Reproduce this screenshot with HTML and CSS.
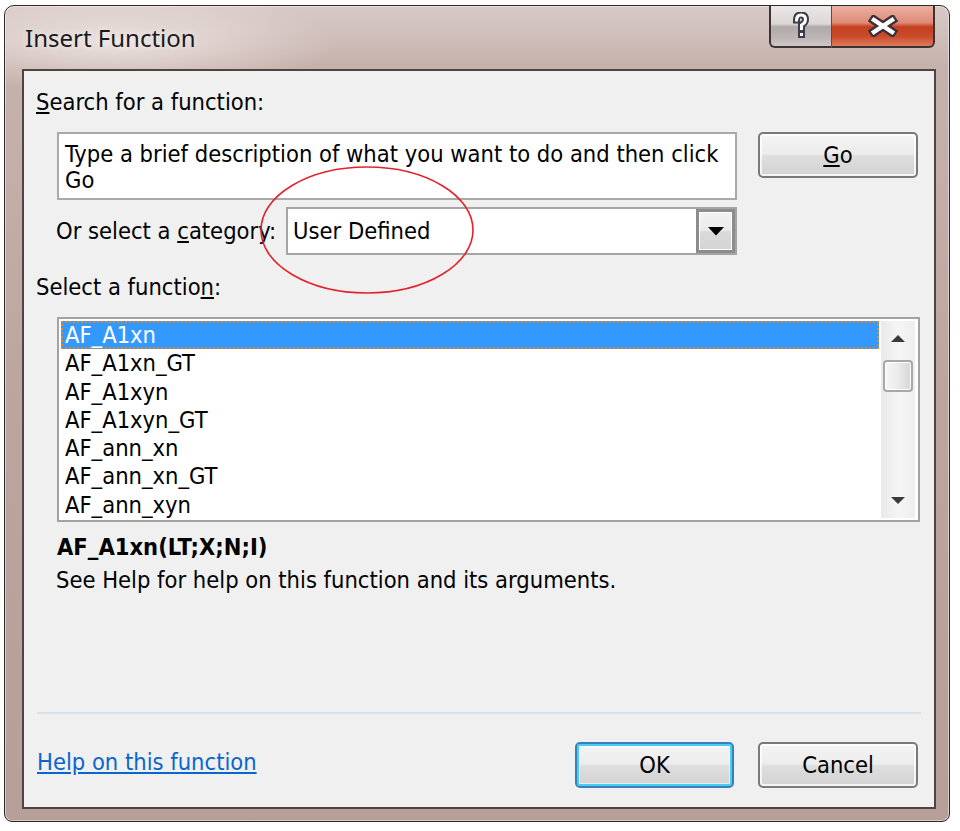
FILE: index.html
```html
<!DOCTYPE html>
<html lang="en">
<head>
<meta charset="utf-8">
<title>Insert Function</title>
<link rel="stylesheet" href="styles.css">
</head>
<body>
<div class="window">
  <div class="titlebar">
    <span class="title">Insert Function</span>
    <div class="caption-btns">
      <div class="cbtn help">
        <svg width="20" height="28" viewBox="-10 -14 20 28">
          <path d="M-4.5 -6 Q-4.5 -11 0 -11 Q4.5 -11 4.5 -6.5 Q4.5 -3 0.5 -1 L0.5 2.5" fill="none" stroke="#3c3c4c" stroke-width="7" stroke-linecap="square"/>
          <rect x="-3" y="5" width="7" height="7" fill="#3c3c4c"/>
          <path d="M-4.5 -6 Q-4.5 -11 0 -11 Q4.5 -11 4.5 -6.5 Q4.5 -3 0.5 -1 L0.5 2.5" fill="none" stroke="#ffffff" stroke-width="3" stroke-linecap="square"/>
          <rect x="-1" y="7" width="3" height="3" fill="#ffffff"/>
        </svg>
      </div>
      <div class="cbtn close">
        <svg width="30" height="22" viewBox="-15 -11 30 22">
          <path d="M-9 -6 L9 6 M9 -6 L-9 6" stroke="#3b2f3a" stroke-width="9" stroke-linecap="square"/>
          <path d="M-9 -6 L9 6 M9 -6 L-9 6" stroke="#ffffff" stroke-width="4.5" stroke-linecap="square"/>
        </svg>
      </div>
    </div>
  </div>
  <div class="client">
    <div class="lbl search-lbl"><u>S</u>earch for a function:</div>
    <div class="search-row">
      <div class="searchbox">Type a brief description of what you want to do and then click Go</div>
      <div class="btn go"><span><u>G</u>o</span></div>
    </div>
    <div class="cat-row">
      <span class="lbl">Or select a <u>c</u>ategory:</span>
      <div class="combo">
        <span class="combo-text">User Defined</span>
        <div class="combo-btn">
          <svg width="16" height="9" viewBox="0 0 16 9"><path d="M0 0 H16 L8 8.5 Z" fill="#000"/></svg>
        </div>
      </div>
    </div>
    <div class="lbl fn-lbl">Select a functio<u>n</u>:</div>
    <div class="listbox">
      <ul class="items">
        <li class="item selected">AF_A1xn</li>
        <li class="item">AF_A1xn_GT</li>
        <li class="item">AF_A1xyn</li>
        <li class="item">AF_A1xyn_GT</li>
        <li class="item">AF_ann_xn</li>
        <li class="item">AF_ann_xn_GT</li>
        <li class="item">AF_ann_xyn</li>
      </ul>
      <div class="scrollbar">
        <div class="sb-arrow">
          <svg width="14" height="8" viewBox="0 0 14 8"><path d="M7 0 L14 7 H0 Z" fill="#3a3a3a"/></svg>
        </div>
        <div class="sb-thumb"></div>
        <div class="sb-track"></div>
        <div class="sb-arrow">
          <svg width="14" height="8" viewBox="0 0 14 8"><path d="M0 1 H14 L7 8 Z" fill="#3a3a3a"/></svg>
        </div>
      </div>
    </div>
    <div class="sig">AF_A1xn(LT;X;N;I)</div>
    <div class="desc">See Help for help on this function and its arguments.</div>
    <div class="sep"></div>
    <div class="bottom-row">
      <a class="help-link" href="#">Help on this function</a>
      <div class="btns">
        <div class="btn ok"><span>OK</span></div>
        <div class="btn cancel"><span>Cancel</span></div>
      </div>
    </div>
  </div>
</div>
<svg class="annot" width="960" height="831" viewBox="0 0 960 831">
  <ellipse cx="367" cy="230" rx="106" ry="63" fill="none" stroke="#e3222b" stroke-width="1.6"/>
</svg>
</body>
</html>
```
FILE: styles.css
```css
html, body {
  margin: 0;
  padding: 0;
}
body {
  position: relative;
  width: 960px;
  height: 831px;
  overflow: hidden;
  background: #ffffff;
  font-family: "DejaVu Sans Condensed", "DejaVu Sans", sans-serif;
  font-stretch: condensed;
  font-size: 23.5px;
  color: #000;
}

.window {
  box-sizing: border-box;
  margin: 5px 0 0 4px;
  width: 946px;
  height: 817px;
  border: 1px solid #2f2a2a;
  border-radius: 10px 10px 8px 8px;
  padding: 0 13px 12px 17px;
  display: flex;
  flex-direction: column;
  background:
    radial-gradient(ellipse 220px 50px at 110px 36px, rgba(240, 232, 230, 0.85), rgba(240, 232, 230, 0) 100%),
    linear-gradient(180deg, #d8cac7 0px, #c6b2ad 60px, #bca59f 400px, #b79f99 817px);
  box-shadow: inset 0 0 0 1px rgba(255, 255, 255, 0.45);
}

.titlebar {
  height: 63px;
  display: flex;
  align-items: flex-start;
}
.title {
  margin: 16px 0 0 3px;
  font-family: "Noto Sans", "Open Sans", sans-serif;
  font-stretch: normal;
  font-size: 24px;
  line-height: 32px;
  color: #1c1a1c;
  text-shadow: 0 0 6px rgba(255, 255, 255, 0.7);
}
.caption-btns {
  margin-left: auto;
  margin-right: 1px;
  display: flex;
}
.cbtn {
  box-sizing: border-box;
  height: 42px;
  border: 2px solid #3e3333;
  border-top: none;
  display: flex;
  align-items: center;
  justify-content: center;
}
.cbtn.help {
  width: 63px;
  border-right: 1px solid #5a4c4c;
  border-radius: 0 0 0 6px;
  background: linear-gradient(180deg, #ece8e8 0%, #dcd6d6 45%, #b1a8a8 52%, #beb6b6 80%, #cfc8c8 100%);
}
.cbtn.close {
  width: 103px;
  border-left: none;
  border-radius: 0 0 6px 0;
  background: linear-gradient(180deg, #eab0a2 0%, #df8a76 42%, #c4401f 52%, #c94a2a 75%, #dc7a5c 100%);
}

.client {
  flex: 1;
  box-sizing: border-box;
  border: 2px solid #4f4442;
  background: #f0f0f0;
  display: flex;
  flex-direction: column;
  padding: 17px 14px 19px 13px;
}

.lbl {
  line-height: 28px;
  white-space: nowrap;
}
.search-lbl {
  margin-left: -1px;
}

.search-row {
  margin-top: 16px;
  padding-left: 20px;
  display: flex;
  align-items: flex-start;
}
.searchbox {
  box-sizing: border-box;
  width: 680px;
  height: 68px;
  border: 2px solid #a9a9a9;
  background: #ffffff;
  padding: 7px 6px 0 6px;
  line-height: 26px;
}

.btn {
  box-sizing: border-box;
  height: 46px;
  border: 2px solid #7a7a7a;
  border-radius: 5px;
  background: linear-gradient(180deg, #f4f4f4 0%, #ececec 48%, #dedede 52%, #d2d2d2 100%);
  box-shadow: inset 0 0 0 2px rgba(255, 255, 255, 0.75);
  display: flex;
  align-items: center;
  justify-content: center;
  line-height: 28px;
}
.btn.go {
  margin-left: 21px;
  width: 160px;
}

.cat-row {
  margin-top: 7px;
  width: 700px;
  box-sizing: border-box;
  padding-left: 19px;
  display: flex;
  align-items: center;
}
.combo {
  margin-left: auto;
  box-sizing: border-box;
  width: 451px;
  height: 48px;
  border: 2px solid #a5a5a5;
  background: #ffffff;
  display: flex;
  align-items: center;
}
.combo-text {
  flex: 1;
  padding-left: 5px;
  line-height: 28px;
}
.combo-btn {
  box-sizing: border-box;
  width: 39px;
  height: 44px;
  border: 3px solid #8c8c8c;
  background: linear-gradient(180deg, #f2f2f2 0%, #ebebeb 48%, #dadada 52%, #d4d4d4 100%);
  box-shadow: inset 0 0 0 1px #ffffff;
  display: flex;
  align-items: center;
  justify-content: center;
}

.fn-lbl {
  margin-top: 18px;
  margin-left: -1px;
}

.listbox {
  margin: 16px 0 0 20px;
  box-sizing: border-box;
  width: 863px;
  height: 205px;
  border: 2px solid #a3a3a3;
  padding: 2px 3px 0 2px;
  background: #ffffff;
  display: flex;
}
.items {
  list-style: none;
  margin: 0;
  padding: 0;
  flex: 1;
  overflow: hidden;
}
.item {
  box-sizing: border-box;
  height: 28.3px;
  line-height: 28.3px;
  padding-left: 4px;
  white-space: nowrap;
}
.item.selected {
  background: #3399ff;
  color: #ffffff;
  border: 2px dotted #e0862a;
  line-height: 24.3px;
  padding-left: 2px;
}

.scrollbar {
  width: 34px;
  margin: 0 0 2px 2px;
  display: flex;
  flex-direction: column;
  background: linear-gradient(90deg, #e9e9e9 0%, #f5f5f5 50%, #eeeeee 100%);
}
.sb-arrow {
  height: 36px;
  display: flex;
  align-items: center;
  justify-content: center;
}
.sb-thumb {
  box-sizing: border-box;
  margin: 3px 2px 0 2px;
  height: 32px;
  border: 2px solid #a8a8a8;
  border-radius: 4px;
  background: linear-gradient(90deg, #f6f6f6 0%, #ececec 45%, #d6d6d6 100%);
  box-shadow: inset 0 0 0 1px #ffffff;
}
.sb-track {
  flex: 1;
}

.sig {
  margin: 11px 0 0 20px;
  font-weight: bold;
  line-height: 28px;
}
.desc {
  margin: 5px 0 0 19px;
  line-height: 28px;
}

.sep {
  margin-top: auto;
  margin-right: -1px;
  height: 2px;
  background: #d9e1e8;
}

.bottom-row {
  margin-top: 28px;
  display: flex;
  align-items: center;
}
.help-link {
  color: #0a66cc;
  text-decoration: underline;
  line-height: 28px;
  margin-bottom: 6px;
}
.btns {
  margin-left: auto;
  margin-right: 2px;
  display: flex;
  gap: 24px;
}
.btn.ok {
  width: 159px;
  border-color: #3a7fb8;
  box-shadow: inset 0 0 0 2px #45cdf4, inset 0 0 0 3px rgba(255, 255, 255, 0.6);
}
.btn.cancel {
  width: 160px;
}

.annot {
  position: absolute;
  left: 0;
  top: 0;
  pointer-events: none;
}
```
